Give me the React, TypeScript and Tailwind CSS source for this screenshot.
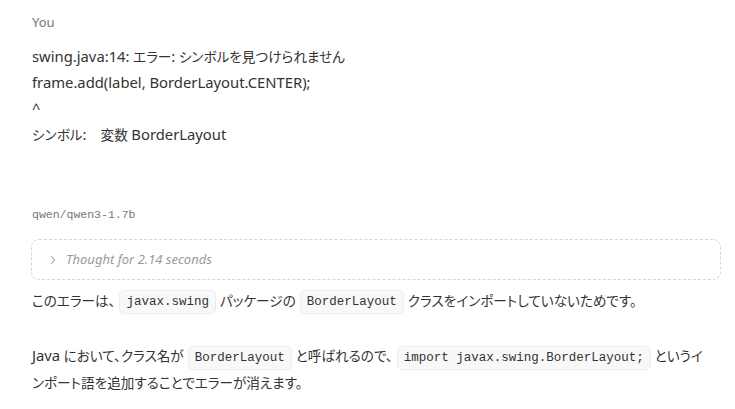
import { ChevronRight } from "lucide-react";

const sans = "font-['Segoe_UI','Noto_Sans','Noto_Sans_CJK_JP',sans-serif]";

function Code({ children }: { children: string }) {
  return (
    <code className="mx-[4px] inline-block rounded-[5px] border border-[#ececec] bg-[#f8f8f8] px-[6px] align-middle font-['Liberation_Mono',monospace] text-[12.5px] leading-[22px] text-[#333] [font-feature-settings:normal]">
      {children}
    </code>
  );
}

// latin runs a touch bigger than the kana
function L({ children }: { children: string }) {
  return <span className="text-[14.8px]">{children}</span>;
}

export default function App() {
  return (
    <div className={`min-h-[409px] w-[735px] bg-white pl-[32px] pr-[14px] pt-[14px] text-[#333] ${sans} [font-feature-settings:'palt']`}>
      <div className="text-[13px] leading-4 text-[#777]">You</div>
      <div className="mt-[13px] text-[13.6px] leading-[26px]">
        <div className="h-[26px]">
          <L>swing.java:14:</L> エラー<L>:</L> シンボルを見つけられません
        </div>
        <div className="h-[26px]">
          <L>frame.add(label, BorderLayout.CENTER);</L>
        </div>
        <div className="h-[26px]">
          <L>^</L>
        </div>
        <div className="h-[26px]">
          シンボル<L>:</L>&nbsp;&nbsp;&nbsp;&nbsp;変数 <L>BorderLayout</L>
        </div>
      </div>

      <div className="mt-[60px] font-['Liberation_Mono',monospace] text-[11.5px] leading-4 text-[#777]">
        qwen/qwen3-1.7b
      </div>
      <div className="ml-[-1px] mt-[16px] flex h-[41px] items-center rounded-[8px] border border-dashed border-[#d6d6d6] pl-[14px]">
        <ChevronRight className="h-[14px] w-[14px] text-[#999]" strokeWidth={1.75} />
        <span className="ml-[6px] text-[13px] italic text-[#9a9a9a]">Thought for 2.14 seconds</span>
      </div>

      <div className="mt-[8px] text-[13.6px] leading-[26px]">
        このエラーは、<Code>javax.swing</Code>パッケージの<Code>BorderLayout</Code>クラスをインポートしていないためです。
      </div>
      <div className="mr-[10px] mt-[28px] text-[13.6px] leading-[26px]">
        <L>Java</L> において、クラス名が<Code>BorderLayout</Code>と呼ばれるので、<Code>import javax.swing.BorderLayout;</Code>というインポート語を追加することでエラーが消えます。
      </div>
    </div>
  );
}
